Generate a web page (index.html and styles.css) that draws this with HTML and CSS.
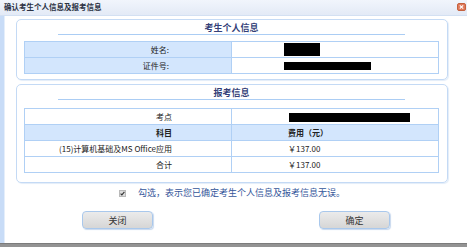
FILE: index.html
```
<!DOCTYPE html>
<html>
  <head>
    <title>确认考生个人信息及报考信息</title>
    <meta http-equiv="Content-Type" content="text/html; charset=utf-8" />
    <link rel="stylesheet" href="styles.css">
  </head>
  <body>
    <div class="win">
      <div class="titlebar">
        <span class="title">确认考生个人信息及报考信息</span>
        <span class="close" title="关闭">
          <svg width="9" height="8" viewBox="0 0 9 8">
            <rect x="0.5" y="0.5" width="8" height="7" rx="1.5" fill="#e07b5c" stroke="#c4623f"/>
            <path d="M2.8 2.3 L6.2 5.7 M6.2 2.3 L2.8 5.7" stroke="#fff" stroke-width="1.1"/>
          </svg>
        </span>
      </div>

      <div class="content">
        <div class="panel panel-person">
          <div class="ptitle">考生个人信息</div>
          <div class="pline"></div>
          <table class="info">
            <tr>
              <td class="label shaded">姓名:</td>
              <td class="value"><span class="redact" style="width: 36px; height: 13px;"></span></td>
            </tr>
            <tr>
              <td class="label shaded">证件号:</td>
              <td class="value"><span class="redact" style="width: 87px; height: 8px;"></span></td>
            </tr>
          </table>
        </div>

        <div class="panel panel-exam">
          <div class="ptitle">报考信息</div>
          <div class="pline"></div>
          <table class="info">
            <tr>
              <td class="label">考点</td>
              <td class="value"><span class="redact" style="width: 121px; height: 9px; margin-left: 1px;"></span></td>
            </tr>
            <tr class="head">
              <td class="label">科目</td>
              <td class="value">费用（元）</td>
            </tr>
            <tr>
              <td class="label">(15)计算机基础及MS Office应用</td>
              <td class="value">￥137.00</td>
            </tr>
            <tr>
              <td class="label">合计</td>
              <td class="value">￥137.00</td>
            </tr>
          </table>
        </div>

        <label class="confirm">
          <span class="check">
            <svg width="7" height="7" viewBox="0 0 7 7">
              <rect x="0.5" y="0.5" width="6" height="6" fill="#dcdcdc" stroke="#b9b9b9"/>
              <path d="M1.6 3.6 L2.9 4.9 L5.4 1.9" fill="none" stroke="#333" stroke-width="1.1"/>
            </svg>
          </span>
          <span>勾选，表示您已确定考生个人信息及报考信息无误。</span>
        </label>

        <div class="buttons">
          <button class="btn">关闭</button>
          <button class="btn">确定</button>
        </div>
      </div>

      <div class="statusbar"></div>
    </div>
  </body>
</html>
```

FILE: styles.css
```
body {
    margin: 0;
    padding: 0;
    font-family: "Noto Sans CJK SC", "Liberation Sans", sans-serif;
    background: #fff;
    color: #222;
}

.win {
    display: flex;
    flex-direction: column;
    width: 467px;
    height: 247px;
    box-sizing: border-box;
}

.titlebar {
    display: flex;
    align-items: center;
    justify-content: space-between;
    height: 16px;
    box-sizing: border-box;
    padding: 0 1px 1px 4px;
    background: linear-gradient(#f1f5fc, #e3eaf6);
    border-bottom: 1px solid #d3e0f2;
}
.title {
    font-size: 7.5px;
    font-weight: bold;
    color: #2b3244;
    line-height: 10px;
}
.close {
    display: flex;
}

.content {
    flex: 1;
    border-left: 4px solid #c8dcf7;
    box-shadow: inset 1px 0 0 #e4eefb;
    padding: 3px 19px 0 12px;
}

.panel {
    border: 1px solid #c4daf5;
    border-radius: 5px;
    box-shadow: 1px 1px 1px #e3edf9;
    padding: 2px 8px 5px 7px;
}
.panel-exam {
    margin-top: 4px;
    padding-bottom: 9px;
}
.ptitle {
    text-align: center;
    font-size: 9px;
    font-weight: bold;
    line-height: 12px;
    color: #343f78;
}
.pline {
    width: 347px;
    margin: 0 auto;
    border-top: 1px solid #abcdf4;
}

.info {
    width: 100%;
    margin-top: 6px;
    border-collapse: collapse;
    border: 1px solid #b0d0f5;
    font-size: 8px;
}
.panel-exam .info {
    margin-top: 8px;
}
.info td {
    width: 50%;
    height: 15px;
    padding: 0;
    border: 1px solid #b0d0f5;
    line-height: 10px;
}
.info .label {
    text-align: right;
    padding-right: 59px;
}
.panel-person .info .label {
    padding-right: 62px;
}
.info .value {
    padding-left: 56px;
}
.panel-person .info .value {
    padding-left: 52px;
}
.info .shaded,
.info .head td {
    background: #d3e6fd;
}
.info .head td {
    font-weight: bold;
}
.redact {
    display: inline-block;
    vertical-align: middle;
    background: #000;
}

.confirm {
    display: flex;
    align-items: center;
    justify-content: center;
    gap: 12px;
    margin-top: 4px;
    font-size: 9px;
    line-height: 12px;
    color: #35569a;
    user-select: none;
}
.check {
    display: flex;
    margin-top: 1px;
}

.buttons {
    display: flex;
    justify-content: center;
    gap: 166px;
    margin-top: 12px;
    padding-left: 8px;
}
.btn {
    width: 71px;
    height: 18px;
    padding: 0;
    font-family: inherit;
    font-size: 9px;
    color: #333;
    background: linear-gradient(#ebebeb, #d6d6d6);
    border: 1px solid #a9c8ec;
    border-radius: 4px;
    box-shadow: 1px 1px 1px #c9d9ee;
}

.statusbar {
    height: 3px;
    background: #939393;
    border-top: 1px solid #7c7c7c;
}
```
